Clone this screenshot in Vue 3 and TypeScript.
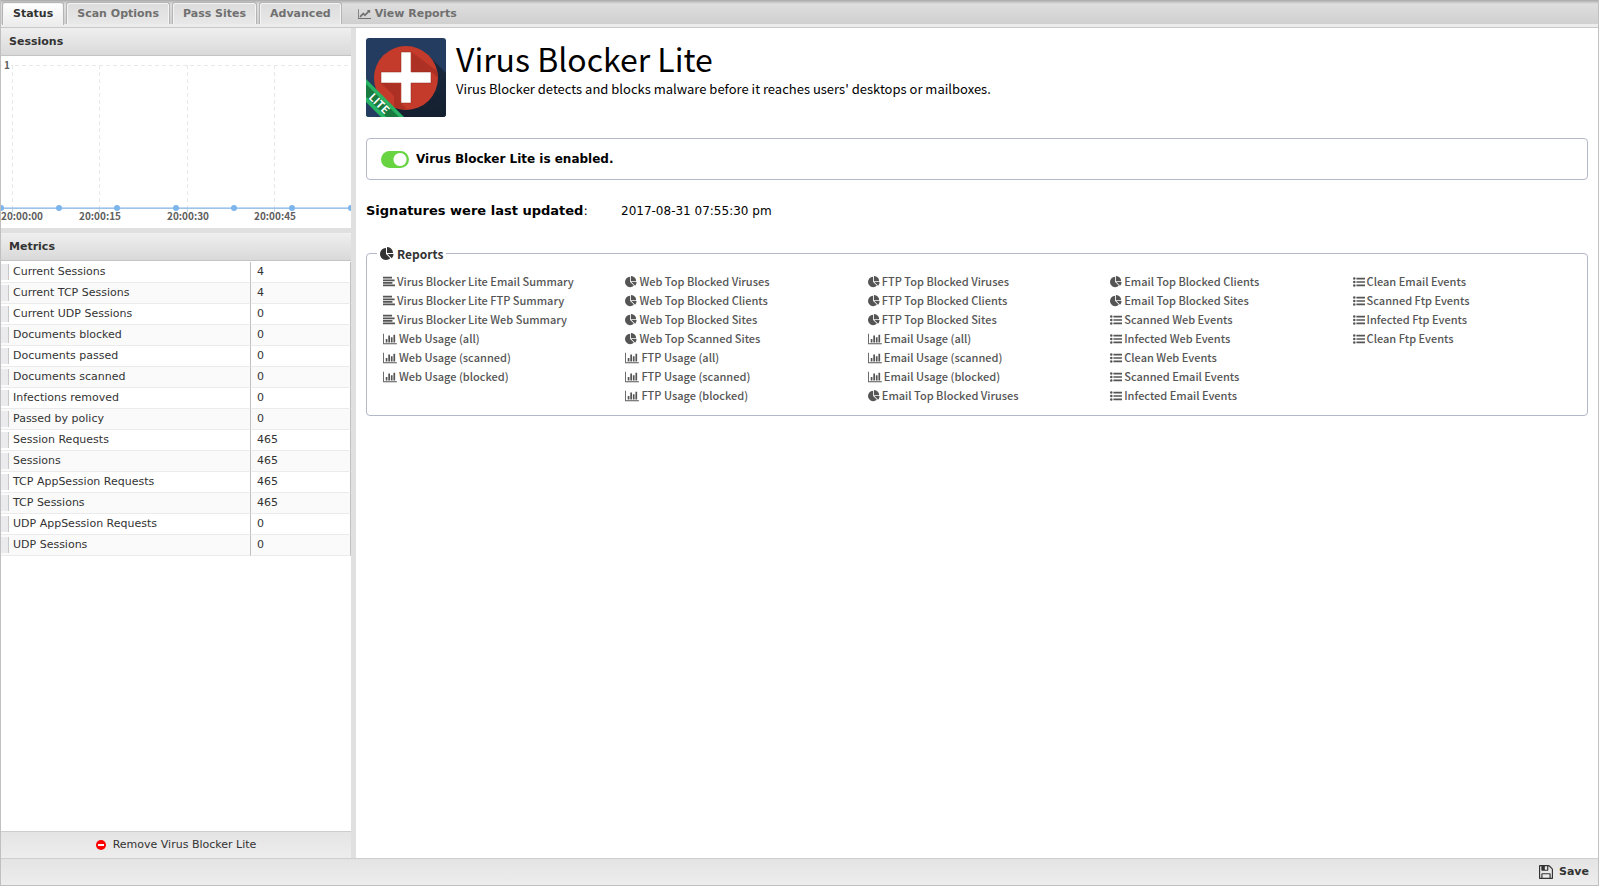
<script setup lang="ts">
import { ref } from 'vue'

type Icon = 'align' | 'bar' | 'pie' | 'list'
interface Report {
  icon: Icon
  title: string
}

const tabs = ['Status', 'Scan Options', 'Pass Sites', 'Advanced']
const activeTab = ref('Status')
const enabled = ref(true)

const metrics: [string, number][] = [
  ['Current Sessions', 4],
  ['Current TCP Sessions', 4],
  ['Current UDP Sessions', 0],
  ['Documents blocked', 0],
  ['Documents passed', 0],
  ['Documents scanned', 0],
  ['Infections removed', 0],
  ['Passed by policy', 0],
  ['Session Requests', 465],
  ['Sessions', 465],
  ['TCP AppSession Requests', 465],
  ['TCP Sessions', 465],
  ['UDP AppSession Requests', 0],
  ['UDP Sessions', 0],
]

const make = (icon: Icon, ...titles: string[]): Report[] => titles.map((title) => ({ icon, title }))

const columns: Report[][] = [
  [
    ...make('align', 'Virus Blocker Lite Email Summary', 'Virus Blocker Lite FTP Summary', 'Virus Blocker Lite Web Summary'),
    ...make('bar', 'Web Usage (all)', 'Web Usage (scanned)', 'Web Usage (blocked)'),
  ],
  [
    ...make('pie', 'Web Top Blocked Viruses', 'Web Top Blocked Clients', 'Web Top Blocked Sites', 'Web Top Scanned Sites'),
    ...make('bar', 'FTP Usage (all)', 'FTP Usage (scanned)', 'FTP Usage (blocked)'),
  ],
  [
    ...make('pie', 'FTP Top Blocked Viruses', 'FTP Top Blocked Clients', 'FTP Top Blocked Sites'),
    ...make('bar', 'Email Usage (all)', 'Email Usage (scanned)', 'Email Usage (blocked)'),
    ...make('pie', 'Email Top Blocked Viruses'),
  ],
  [
    ...make('pie', 'Email Top Blocked Clients', 'Email Top Blocked Sites'),
    ...make('list', 'Scanned Web Events', 'Infected Web Events', 'Clean Web Events', 'Scanned Email Events', 'Infected Email Events'),
  ],
  make('list', 'Clean Email Events', 'Scanned Ftp Events', 'Infected Ftp Events', 'Clean Ftp Events'),
]

const iconPaths: Record<Icon, string> = {
  align: 'M0 128h1344v256h-1344zM0 512h1728v256h-1728zM0 896h1408v256h-1408zM0 1280h1792v256h-1792z',
  bar: 'M640 896v512h-256v-512h256zm384-512v1024h-256v-1024h256zm1024 1152v128h-2048v-1536h128v1408h1920zm-640-896v768h-256v-768h256zm384-384v1152h-256v-1152h256z',
  pie: 'M768 890l546 546q-106 108-247.5 168t-298.5 60q-209 0-385.5-103t-279.5-279.5-103-385.5 103-385.5 279.5-279.5 385.5-103v762zm187 6h773q0 157-60 298.5t-168 247.5zm709-128h-768v-768q209 0 385.5 103t279.5 279.5 103 385.5z',
  list: 'M0 384a192 192 0 1 0 384 0a192 192 0 1 0-384 0zM0 896a192 192 0 1 0 384 0a192 192 0 1 0-384 0zM0 1408a192 192 0 1 0 384 0a192 192 0 1 0-384 0zM512 256h1280v256h-1280zM512 768h1280v256h-1280zM512 1280h1280v256h-1280z',
}

const ticks = [
  { x: 12, label: '20:00:00', labelX: 21 },
  { x: 99, label: '20:00:15', labelX: 99 },
  { x: 187, label: '20:00:30', labelX: 187 },
  { x: 274, label: '20:00:45', labelX: 274 },
]
const points = [0, 58, 116, 175, 233, 291, 350]
</script>

<template>
  <div class="app">
    <nav class="tabs">
      <button
        v-for="tab in tabs"
        :key="tab"
        type="button"
        class="tab"
        :class="{ active: tab === activeTab }"
        @click="activeTab = tab"
      >{{ tab }}</button>
      <button type="button" class="view-reports">
        <svg class="wide" viewBox="0 0 2048 1792" aria-hidden="true">
          <path d="M2048 1536v128h-2048v-1536h128v1408h1920zm-128-1248v435q0 21-19.5 29.5t-35.5-7.5l-121-121-633 633q-10 10-23 10t-23-10l-233-233-416 416-192-192 585-585q10-10 23-10t23 10l233 233 464-464-121-121q-16-16-7.5-35.5t29.5-19.5h435q14 0 23 9t9 23z" />
        </svg>
        <span>View Reports</span>
      </button>
    </nav>

    <div class="body">
      <aside class="side">
        <section class="panel">
          <h2>Sessions</h2>
          <svg class="chart" viewBox="0 0 350 172" role="img" aria-label="Sessions">
            <line class="grid" x1="0" y1="9.500" x2="350" y2="9.500" />
            <rect class="label-back" x="1" y="2" width="9" height="14" />
            <text x="3" y="13">1</text>
            <g v-for="tick in ticks" :key="tick.label">
              <line class="grid" :x1="tick.x - 0.5" y1="9" :x2="tick.x - 0.5" y2="152" />
              <line class="mark" :x1="tick.x - 0.5" y1="152" :x2="tick.x - 0.5" y2="156" />
              <text :x="tick.labelX" y="164" text-anchor="middle">{{ tick.label }}</text>
            </g>
            <line class="axis" x1="0" y1="152.500" x2="350" y2="152.500" />
            <line class="series" x1="0" y1="152" x2="350" y2="152" />
            <circle v-for="x in points" :key="x" class="dot" :cx="x" cy="152" r="3" />
          </svg>
        </section>
        <section class="panel metrics">
          <h2>Metrics</h2>
          <table>
            <tbody>
              <tr v-for="[name, value] in metrics" :key="name">
                <th scope="row"><span class="handle"></span>{{ name }}</th>
                <td>{{ value }}</td>
              </tr>
            </tbody>
          </table>
        </section>
        <button type="button" class="remove">
          <svg viewBox="0 0 10 10" aria-hidden="true">
            <circle cx="5" cy="5" r="5" fill="#f00" />
            <rect x="2" y="4" width="6" height="2" fill="#fff" />
          </svg>
          <span>Remove Virus Blocker Lite</span>
        </button>
      </aside>

      <main class="main">
        <header class="intro">
          <svg class="logo" viewBox="0 0 80 79" aria-hidden="true">
            <defs>
              <clipPath id="tile"><rect width="80" height="79" rx="3" /></clipPath>
              <clipPath id="disc"><circle cx="40" cy="40" r="31.500" /></clipPath>
              <linearGradient id="shade" x1="0" y1="0" x2="0" y2="1">
                <stop offset="0" stop-color="#1b2940" />
                <stop offset="1" stop-color="#14202f" />
              </linearGradient>
            </defs>
            <g clip-path="url(#tile)">
              <rect width="80" height="79" fill="#243c5f" />
              <path d="M62 17L80 35V79H35L17 62z" fill="url(#shade)" />
              <circle cx="40" cy="40" r="32" fill="#c43a2b" />
              <path clip-path="url(#disc)" d="M46 14L80 48V80H50L34 64L34 46L15 45L28 58V80H80V40z" fill="#ad3024" />
              <path clip-path="url(#disc)" d="M46 14L80 48V35L65 34L46 34z" fill="#ad3024" />
              <path d="M35 14h10v20h20v11h-20v20h-10v-20h-20v-11h20z" fill="#fff" stroke="#8f281e" stroke-width="0.500" />
              <path d="M0 41L38 79H0z" fill="#29b463" />
              <path d="M0 46L33 79H20L0 59z" fill="#197a40" />
              <path d="M0 63L16 79H0z" fill="#243c5f" />
              <path d="M0 59L20 79H15L0 64z" fill="#29b463" />
              <text class="lite" transform="translate(2 60) rotate(45)">LITE</text>
            </g>
          </svg>
          <div>
            <h1>Virus Blocker Lite</h1>
            <p>Virus Blocker detects and blocks malware before it reaches users' desktops or mailboxes.</p>
          </div>
        </header>

        <div class="state">
          <input id="enabled" v-model="enabled" type="checkbox" role="switch" />
          <label for="enabled">Virus Blocker Lite is {{ enabled ? 'enabled' : 'disabled' }}.</label>
        </div>

        <div class="signatures">
          <span class="caption"><b>Signatures were last updated</b>:</span>
          <span class="date">2017-08-31 07:55:30 pm</span>
        </div>

        <fieldset class="reports">
          <legend>
            <svg viewBox="0 0 1792 1792" aria-hidden="true"><path :d="iconPaths.pie" /></svg>
            <span>Reports</span>
          </legend>
          <div class="columns">
            <ul v-for="(column, i) in columns" :key="i">
              <li v-for="report in column" :key="report.title">
                <a href="#">
                  <svg
                    :class="{ wide: report.icon === 'bar' }"
                    :viewBox="report.icon === 'bar' ? '0 0 2048 1792' : '0 0 1792 1792'"
                    aria-hidden="true"
                  ><path :d="iconPaths[report.icon]" /></svg>
                  <span>{{ report.title }}</span>
                </a>
              </li>
            </ul>
          </div>
        </fieldset>
      </main>
    </div>

    <footer class="footer">
      <button type="button">
        <svg viewBox="0 0 1536 1536" aria-hidden="true">
          <path transform="translate(-128 -128)" d="M512 1536h768v-384h-768v384zm896 0h128v-896q0-14-10-38.500t-20-34.500l-281-281q-10-10-34-20t-39-10v416q0 40-28 68t-68 28h-576q-40 0-68-28t-28-68v-416h-128v1280h128v-416q0-40 28-68t68-28h832q40 0 68 28t28 68v416zm-384-928v-320q0-13-9.500-22.500t-22.500-9.500h-192q-13 0-22.500 9.500t-9.500 22.500v320q0 13 9.500 22.500t22.500 9.500h192q13 0 22.500-9.500t9.500-22.500zm640 32v928q0 40-28 68t-68 28h-1344q-40 0-68-28t-28-68v-1344q0-40 28-68t68-28h928q40 0 88 20t76 48l280 280q28 28 48 76t20 88z" />
        </svg>
        <span>Save</span>
      </button>
    </footer>
  </div>
</template>

<style>
body {
  margin: 0;
}
</style>

<style scoped>
* {
  box-sizing: border-box;
}
.app {
  display: flex;
  flex-direction: column;
  min-height: 100vh;
  border: 1px solid #c0c0c0;
  border-top: 0;
  background: #e0e0e0;
  color: #333;
  font: 11px/16px "DejaVu Sans", sans-serif;
}
button {
  margin: 0;
  padding: 0;
  border: 0;
  background: none;
  color: inherit;
  font: inherit;
  cursor: pointer;
}
svg {
  display: block;
  flex: none;
  fill: currentColor;
}
.tabs {
  display: flex;
  align-items: flex-end;
  gap: 2px;
  height: 28px;
  padding: 2px 2px 3px;
  border-bottom: 1px solid #c8c8c8;
  background:
    linear-gradient(#ececec, #ececec) 0 24px / 100% 3px no-repeat,
    linear-gradient(#a8a8a8, #c4c4c4 2px, #dedede 4px, #d0d0d0 24px);
  padding-left: 1px;
}
.tab {
  height: 22px;
  padding: 0 10px;
  border: 1px solid #b4b4b4;
  border-bottom: 0;
  border-radius: 3px 3px 0 0;
  background: linear-gradient(#dcdcdc, #e8e8e8);
  box-shadow: inset 1px 1px #f4f4f4, inset -1px 0 #f4f4f4;
  color: #707070;
  font-weight: bold;
}
.tab.active {
  height: 23px;
  margin-bottom: -1px;
  background: linear-gradient(#fff, #ececec);
  color: #333;
}
.view-reports {
  display: flex;
  align-items: center;
  gap: 4px;
  height: 20px;
  margin-left: 14px;
  color: #707070;
  font-weight: bold;
}
.view-reports .wide {
  width: 13px;
  height: 12px;
}
.body {
  display: flex;
  flex: 1;
  gap: 5px;
}
.side {
  display: flex;
  flex: none;
  flex-direction: column;
  width: 350px;
}
.panel {
  background: #fff;
}
.panel h2 {
  height: 28px;
  margin: 0;
  padding: 0 8px;
  border-bottom: 1px solid #c4c4c4;
  background: linear-gradient(#efefef, #d9d9d9);
  font-size: 11px;
  line-height: 27px;
}
.metrics {
  flex: 1;
  margin-top: 5px;
}
.chart {
  width: 100%;
  height: auto;
}
.chart text {
  fill: #606060;
  font: bold 10px "Noto Sans CJK SC", sans-serif;
}
.label-back {
  fill: #fff;
}
.grid {
  stroke: #e8e8e8;
  stroke-dasharray: 4 3;
}
.mark {
  stroke: #c0d0e0;
}
.axis {
  stroke: #c0d0e0;
}
.series {
  stroke: #7cb5ec;
}
.dot {
  fill: #7cb5ec;
}
table {
  width: 100%;
  margin-top: 1px;
  border-collapse: separate;
  border-spacing: 0;
}
tr:nth-child(even) {
  background: #fafafa;
}
th,
td {
  height: 21px;
  padding: 0;
  border-right: 1px solid #c0c0c0;
  border-bottom: 1px solid #ebebeb;
  text-align: left;
  font-weight: normal;
}
th {
  width: 250px;
}
td {
  padding-left: 6px;
}
.handle {
  display: inline-block;
  width: 8px;
  height: 16px;
  margin-right: 4px;
  border-right: 1px solid #c8c8c8;
  background: #ebebed;
  vertical-align: top;
}
.remove {
  display: flex;
  align-items: center;
  justify-content: center;
  gap: 7px;
  height: 27px;
  border-top: 1px solid #cecece;
  background: linear-gradient(#e4e4e4, #ededed);
}
.remove svg {
  width: 10px;
  height: 10px;
}
.main {
  flex: 1;
  min-width: 0;
  padding: 10px;
  background: #fff;
  color: #000;
  font-size: 13px;
}
.intro {
  display: flex;
  gap: 10px;
  font-family: "Noto Sans CJK SC", sans-serif;
}
.logo {
  width: 80px;
  height: 79px;
}
.lite {
  fill: #fff;
  font: bold 11px "Noto Sans CJK SC", sans-serif;
}
h1 {
  margin: 0;
  font-weight: 400;
  font-size: 32px;
  line-height: 40px;
}
.intro p {
  margin: 0;
  font-size: 13px;
  line-height: 22px;
}
.state {
  display: flex;
  align-items: center;
  gap: 7px;
  height: 42px;
  margin-top: 21px;
  padding: 0 14px;
  border: 1px solid #b5b8c8;
  border-radius: 4px;
  font-weight: bold;
  font-size: 12px;
}
.state input {
  width: 28px;
  height: 17px;
  margin: 0;
  border-radius: 9px;
  background: radial-gradient(circle at 9px 50%, #fff 6px, #aaa 7px);
  appearance: none;
}
.state input:checked {
  background: radial-gradient(circle at 19px 50%, #fff 6px, #68d442 7px);
}
.signatures {
  display: flex;
  align-items: baseline;
  margin-top: 23px;
}
.caption {
  width: 255px;
}
.date {
  font-size: 12px;
}
.reports {
  min-width: 0;
  margin: 25px 0 0;
  padding: 9px 16px 10px;
  border: 1px solid #b5b8c8;
  border-radius: 4px;
  color: #555;
  font: 500 11px/19px "Noto Sans CJK SC", sans-serif;
}
legend {
  display: flex;
  align-items: center;
  gap: 3px;
  margin-left: -6px;
  padding: 0 3px;
  color: #333;
  font-weight: bold;
  font-size: 12px;
}
legend svg {
  width: 14px;
  height: 14px;
}
.columns {
  display: grid;
  grid-template-columns: repeat(5, minmax(0, 1fr));
  column-gap: 24px;
}
ul {
  margin: 0;
  padding: 0;
  list-style: none;
}
a {
  display: flex;
  align-items: center;
  gap: 2px;
  color: inherit;
  text-decoration: none;
  white-space: nowrap;
}
a svg {
  width: 12px;
  height: 12px;
}
a .wide {
  width: 14px;
}
.footer {
  display: flex;
  align-items: center;
  justify-content: flex-end;
  height: 27px;
  padding: 0 9px;
  border-top: 1px solid #cecece;
  background: linear-gradient(#e4e4e4, #ededed);
}
.footer button {
  display: flex;
  align-items: center;
  gap: 6px;
  font-weight: bold;
}
.footer svg {
  width: 14px;
  height: 14px;
}
</style>
